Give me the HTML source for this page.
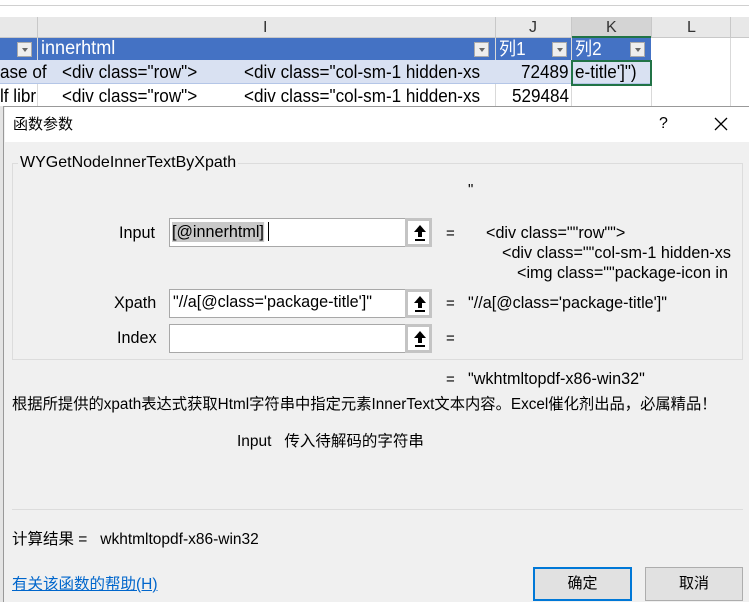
<!DOCTYPE html>
<html><head><meta charset="utf-8"><style>
*{margin:0;padding:0;box-sizing:border-box}
body{width:749px;height:602px;overflow:hidden;background:#fff;position:relative;font-family:"Liberation Sans","Noto Sans CJK SC",sans-serif;font-size:15px;color:#000}
.a{position:absolute;white-space:nowrap;line-height:20px}
.n{font-size:16.5px;transform-origin:0 50%;transform:scaleX(.98)}
.cell{position:absolute;white-space:nowrap;font-size:18px;line-height:22px;transform-origin:0 50%;transform:scaleX(.95)}
.box{position:absolute;background:#fff;border:1px solid #a8a8a8}
.btn{position:absolute;width:27px;height:29px;border:3px solid #c4c4c4;background:#fff}
.btn svg{position:absolute;left:5px;top:3px}
.flt{position:absolute;top:42px;width:15px;height:15px;background:#eee;border:1px solid #aaa}
.flt:after{content:"";position:absolute;left:4px;top:5px;border:3px solid transparent;border-top:4px solid #666}
</style></head><body>
<!-- spreadsheet -->
<div class="a" style="left:0;top:5px;width:749px;height:1px;background:#d0d0d0"></div>
<div class="a" style="left:0;top:17px;width:749px;height:21px;background:#e8e8e8;border-bottom:1px solid #c8c8c8"></div>
<div class="a" style="left:571px;top:17px;width:80px;height:21px;background:#d4d4d4;border-bottom:2px solid #217346"></div>
<div class="a" style="left:37px;top:17px;width:1px;height:21px;background:#c8c8c8"></div>
<div class="a" style="left:495px;top:17px;width:1px;height:21px;background:#c8c8c8"></div>
<div class="a" style="left:571px;top:17px;width:1px;height:21px;background:#c8c8c8"></div>
<div class="a" style="left:651px;top:17px;width:1px;height:21px;background:#c8c8c8"></div>
<div class="a" style="left:730px;top:17px;width:1px;height:21px;background:#c8c8c8"></div>
<div class="a" style="left:263px;top:18px;color:#333;font-size:16px">I</div>
<div class="a" style="left:529px;top:18px;color:#333;font-size:16px">J</div>
<div class="a" style="left:606px;top:18px;color:#333;font-size:16px">K</div>
<div class="a" style="left:687px;top:18px;color:#333;font-size:16px">L</div>
<div class="a" style="left:0;top:38px;width:651px;height:22px;background:#4472c4"></div>
<div class="a" style="left:37px;top:38px;width:1px;height:68px;background:#d9d9d9"></div>
<div class="a" style="left:495px;top:38px;width:1px;height:68px;background:#d9d9d9"></div>
<div class="a" style="left:571px;top:38px;width:1px;height:68px;background:#d9d9d9"></div>
<div class="a" style="left:651px;top:60px;width:1px;height:46px;background:#d9d9d9"></div>
<div class="a" style="left:730px;top:38px;width:1px;height:68px;background:#d9d9d9"></div>
<div class="flt" style="left:17px"></div>
<div class="flt" style="left:474px"></div>
<div class="flt" style="left:552px"></div>
<div class="flt" style="left:630px"></div>
<div class="cell" style="left:41px;top:38px;color:#fff;font-size:19px">innerhtml</div>
<div class="cell" style="left:499px;top:38px;color:#fff;font-size:18px">列1</div>
<div class="cell" style="left:575px;top:38px;color:#fff;font-size:18px">列2</div>
<div class="a" style="left:0;top:60px;width:651px;height:24px;background:#d9e1f2;border-bottom:1px solid #b4c6e7"></div>
<div class="cell" style="left:0;top:61px">ase of</div>
<div class="cell" style="left:62px;top:61px">&lt;div class="row"&gt;</div>
<div class="cell" style="left:244px;top:61px">&lt;div class="col-sm-1 hidden-xs</div>
<div class="cell" style="left:521px;top:61px">72489</div>
<div class="cell" style="left:575px;top:61px">e-title']")</div>
<div class="a" style="left:571px;top:60px;width:81px;height:26px;border:2px solid #217346"></div>
<div class="cell" style="left:0;top:85px">lf libr</div>
<div class="cell" style="left:62px;top:85px">&lt;div class="row"&gt;</div>
<div class="cell" style="left:244px;top:85px">&lt;div class="col-sm-1 hidden-xs</div>
<div class="cell" style="left:512px;top:85px">529484</div>
<div class="a" style="left:0;top:106px;width:4px;height:496px;background:#e4e4e4;border-right:1px solid #999"></div>
<!-- dialog -->
<div class="a" style="left:4px;top:106px;width:745px;height:496px;background:#f0f0f0;border-top:1px solid #999"></div>
<div class="a" style="left:5px;top:107px;width:744px;height:35px;background:#fff"></div>
<div class="a" style="left:13px;top:115px;font-size:15px">函数参数</div>
<div class="a" style="left:659px;top:114px;font-size:16px">?</div>
<svg class="a" style="left:714px;top:117px" width="14" height="14"><path d="M1 1L13 13M13 1L1 13" stroke="#000" stroke-width="1.3"/></svg>
<div class="a" style="left:12px;top:163px;width:731px;height:197px;border:1px solid #dcdcdc"></div>
<div class="a" style="left:18px;top:153px;background:#f0f0f0;padding:0 2px;font-size:16px">WYGetNodeInnerTextByXpath</div>
<div class="a" style="left:468px;top:180px">"</div>
<div class="a n" style="left:119px;top:223px">Input</div>
<div class="box" style="left:169px;top:218px;width:237px;height:29px"></div>
<div class="a n" style="left:172px;top:222px;background:#c8c8c8">[@innerhtml]</div>
<div class="a" style="left:268px;top:222px;width:1px;height:19px;background:#000"></div>
<div class="a n" style="left:114px;top:293px">Xpath</div>
<div class="box" style="left:169px;top:289px;width:237px;height:29px"></div>
<div class="a n" style="left:173px;top:292px">"//a[@class='package-title']"</div>
<div class="a n" style="left:117px;top:328px">Index</div>
<div class="box" style="left:169px;top:324px;width:237px;height:29px"></div>
<div class="btn" style="left:405px;top:218px"><svg width="14" height="18"><path d="M7 1L1 8H5V13H9V8H13Z" fill="#000"/><rect x="2" y="15" width="10" height="2" fill="#000"/></svg></div>
<div class="btn" style="left:405px;top:289px"><svg width="14" height="18"><path d="M7 1L1 8H5V13H9V8H13Z" fill="#000"/><rect x="2" y="15" width="10" height="2" fill="#000"/></svg></div>
<div class="btn" style="left:405px;top:324px"><svg width="14" height="18"><path d="M7 1L1 8H5V13H9V8H13Z" fill="#000"/><rect x="2" y="15" width="10" height="2" fill="#000"/></svg></div>
<div class="a" style="left:446px;top:224px">=</div>
<div class="a" style="left:446px;top:294px">=</div>
<div class="a" style="left:446px;top:329px">=</div>
<div class="a n" style="left:486px;top:223px">&lt;div class=""row""&gt;</div>
<div class="a n" style="left:502px;top:243px;width:240px;overflow:hidden">&lt;div class=""col-sm-1 hidden-xs</div>
<div class="a n" style="left:517px;top:263px;width:225px;overflow:hidden">&lt;img class=""package-icon in</div>
<div class="a n" style="left:468px;top:293px">"//a[@class='package-title']"</div>
<div class="a" style="left:446px;top:370px">=</div>
<div class="a n" style="left:468px;top:369px">"wkhtmltopdf-x86-win32"</div>
<div class="a" style="left:12px;top:395px;font-size:15.3px">根据所提供的xpath表达式获取Html字符串中指定元素InnerText文本内容。Excel催化剂出品，必属精品！</div>
<div class="a" style="left:237px;top:432px;font-size:15.5px">Input&nbsp;&nbsp;&nbsp;传入待解码的字符串</div>
<div class="a" style="left:12px;top:509px;width:731px;height:1px;background:#dcdcdc"></div>
<div class="a" style="left:12px;top:530px;font-size:15.5px">计算结果 =&nbsp;&nbsp;&nbsp;wkhtmltopdf-x86-win32</div>
<div class="a" style="left:12px;top:575px;font-size:15.5px;color:#0066cc;text-decoration:underline">有关该函数的帮助(H)</div>
<div class="a" style="left:533px;top:567px;width:99px;height:34px;background:#e1e1e1;border:2px solid #0078d7;text-align:center;line-height:30px">确定</div>
<div class="a" style="left:645px;top:567px;width:98px;height:34px;background:#e1e1e1;border:1px solid #adadad;text-align:center;line-height:32px">取消</div>
</body></html>
